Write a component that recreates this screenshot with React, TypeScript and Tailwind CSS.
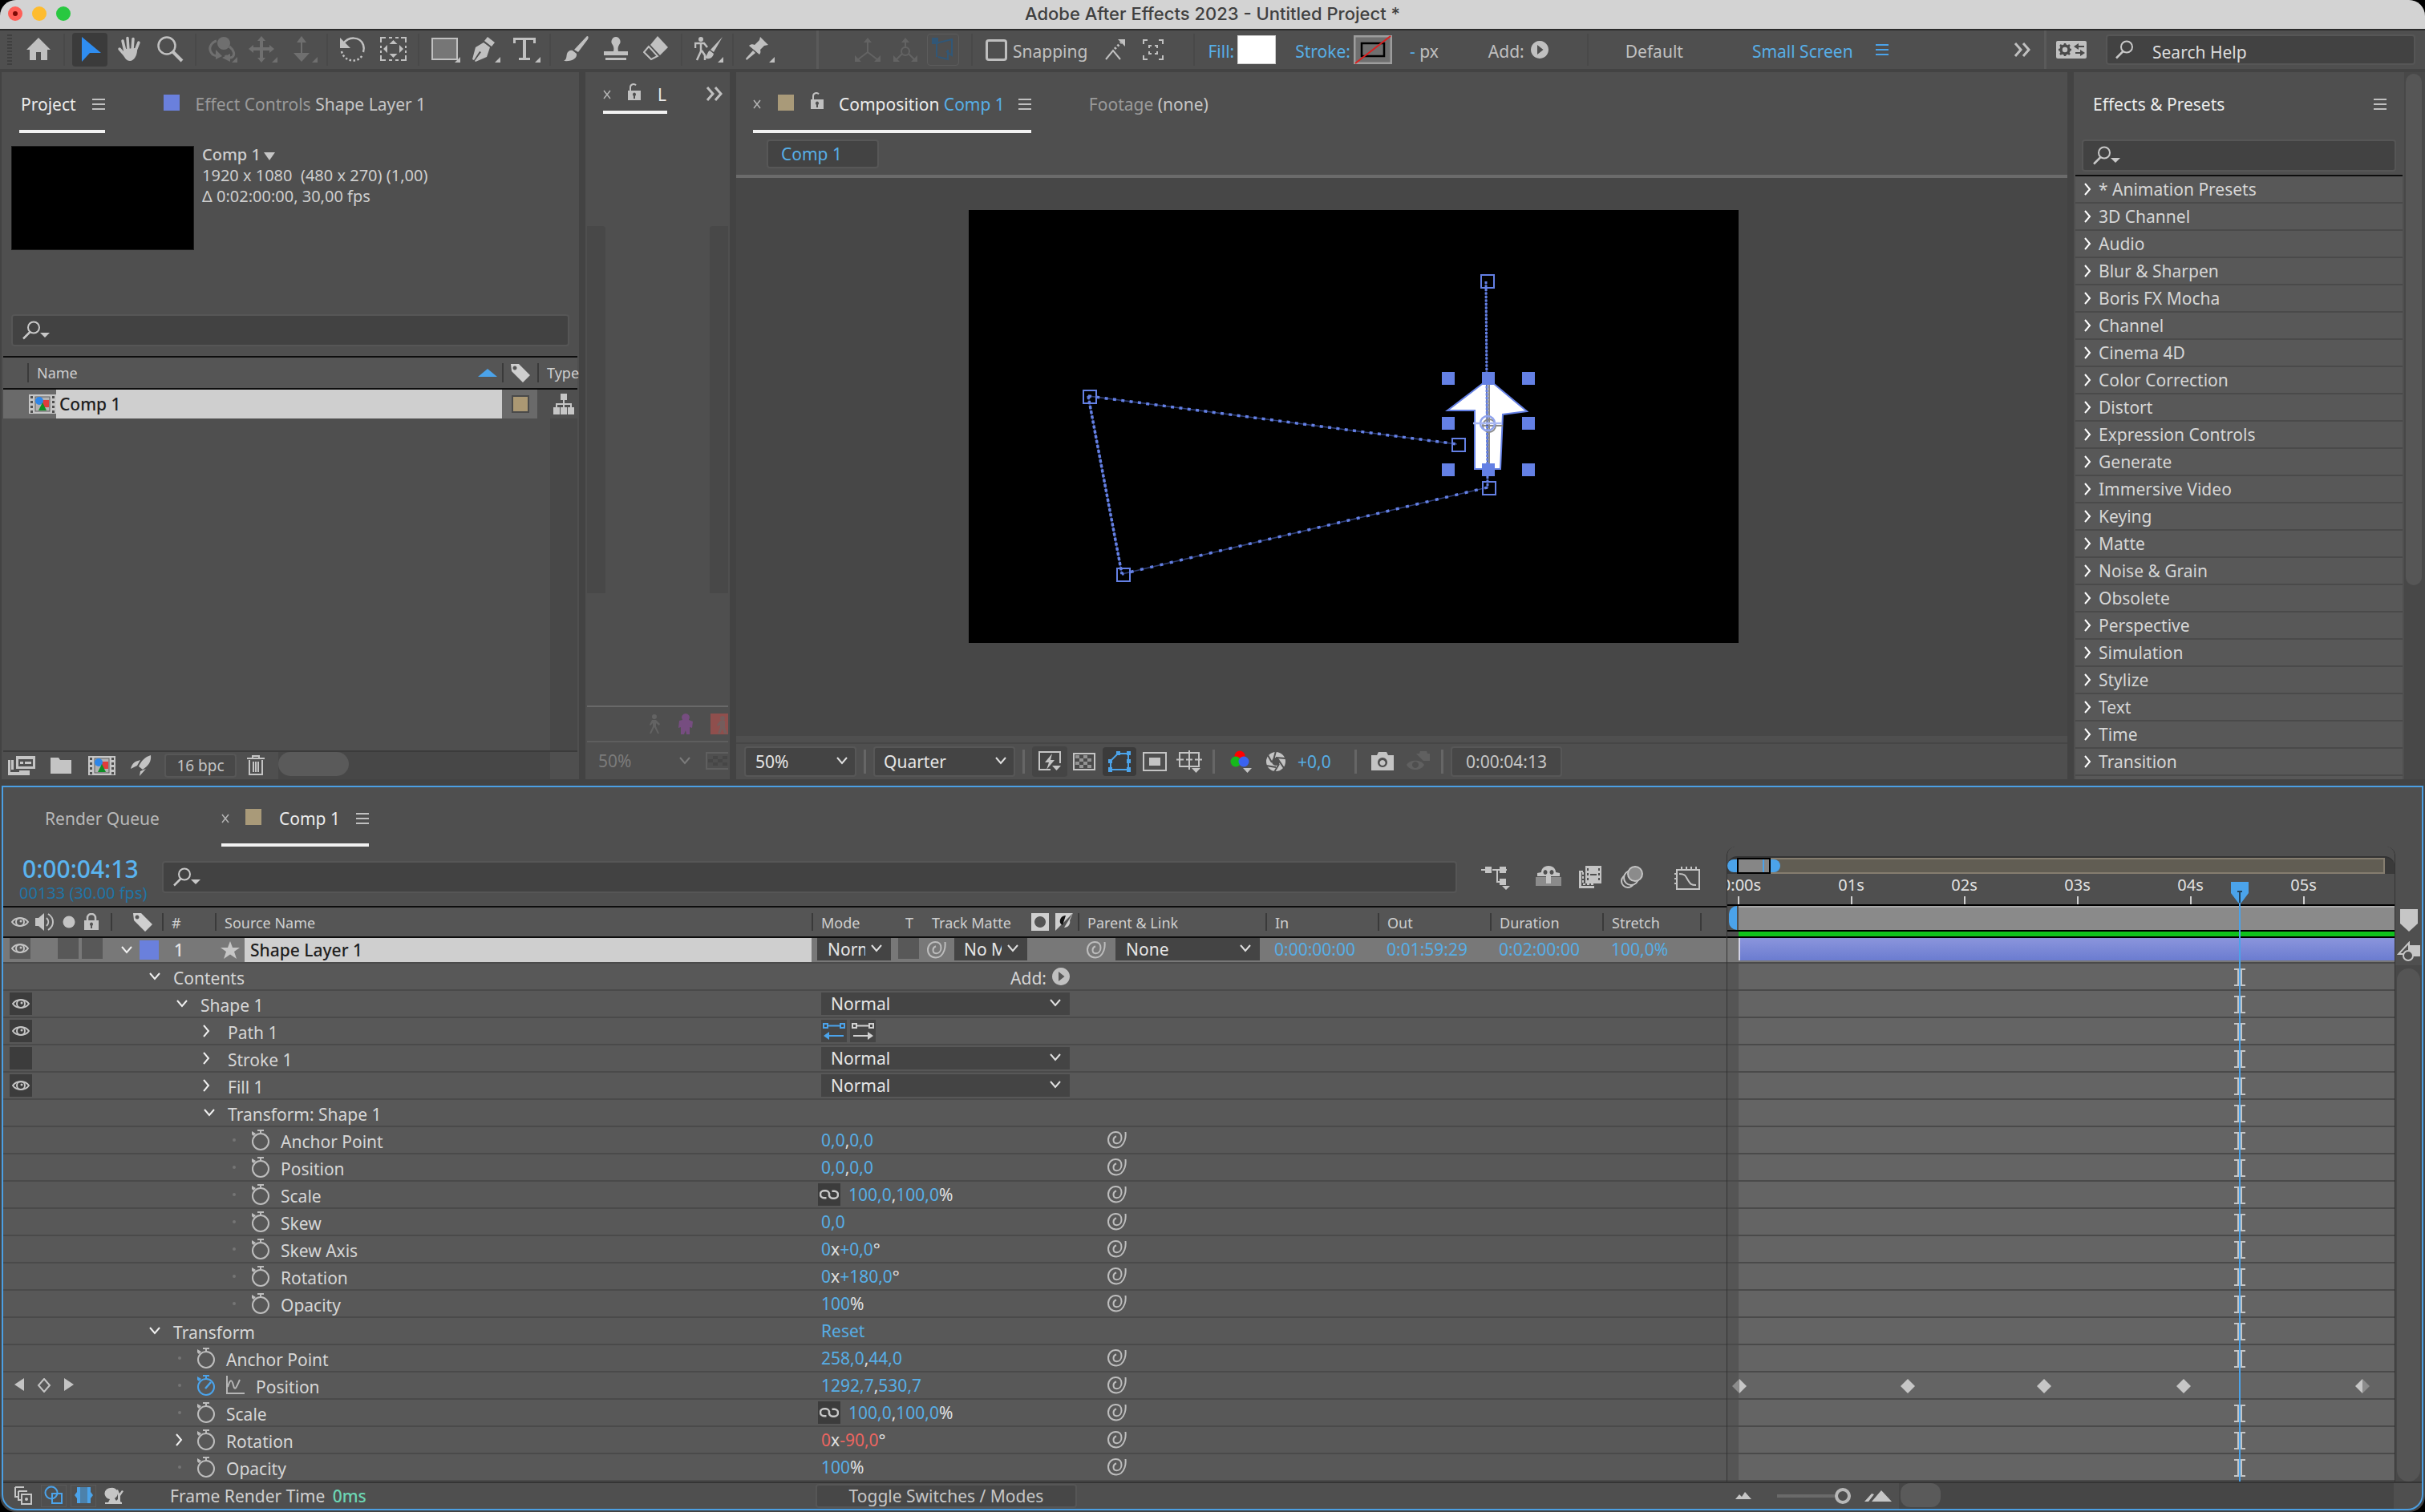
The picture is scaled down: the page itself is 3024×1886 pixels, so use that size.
import type { ReactNode } from "react";

type GlyphProps = { w: number; h: number; className?: string; children: ReactNode };

function Glyph({ w, h, className = "", children }: GlyphProps) {
  return (
    <svg width={w} height={h} viewBox={`0 0 ${w} ${h}`} fill="currentColor" className={`shrink-0 ${className}`} aria-hidden="true">
      {children}
    </svg>
  );
}

/* ---------- small shared icons ---------- */

const MenuIcon = ({ className = "" }: { className?: string }) => (
  <Glyph w={16} h={16} className={className}>
    <path d="M0 1h16v2H0zM0 7h16v2H0zM0 13h16v2H0z" />
  </Glyph>
);

const ChevronDown = ({ className = "" }: { className?: string }) => (
  <Glyph w={16} h={12} className={className}>
    <path d="M2 2l6 7 6-7" fill="none" stroke="currentColor" strokeWidth="2" />
  </Glyph>
);

const ChevronRight = ({ className = "" }: { className?: string }) => (
  <Glyph w={10} h={16} className={className}>
    <path d="M1 1l6 7-6 7" fill="none" stroke="currentColor" strokeWidth="2" />
  </Glyph>
);

const DoubleChevron = ({ className = "" }: { className?: string }) => (
  <Glyph w={22} h={18} className={className}>
    <path d="M2 1l7 8-7 8M12 1l7 8-7 8" fill="none" stroke="currentColor" strokeWidth="3" />
  </Glyph>
);

const CloseIcon = () => (
  <Glyph w={10} h={12} className="text-[#b5b5b5]">
    <path d="M1 1l8 10M9 1l-8 10" fill="none" stroke="currentColor" strokeWidth="1.500" />
  </Glyph>
);

const UnlockIcon = () => (
  <Glyph w={18} h={22} className="text-[#c0c0c0]">
    <path d="M4 10V5a4 4 0 0 1 7-2.600" fill="none" stroke="currentColor" strokeWidth="2" />
    <path fillRule="evenodd" d="M1 9h16v12H1zM9 11.500a2.300 2.300 0 0 0-1 4.200V19h2v-3.300a2.300 2.300 0 0 0-1-4.200z" />
  </Glyph>
);

const LockIcon = () => (
  <Glyph w={20} h={22}>
    <path d="M5 10V6a5 5 0 0 1 10 0v4" fill="none" stroke="currentColor" strokeWidth="2.500" />
    <path fillRule="evenodd" d="M1 9h18v12H1zM10 11.500a2.300 2.300 0 0 0-1 4.200V19h2v-3.300a2.300 2.300 0 0 0-1-4.200z" />
  </Glyph>
);

const SearchIcon = ({ menu = false }: { menu?: boolean }) => (
  <Glyph w={34} h={24} className="text-[#c8c8c8]">
    <circle cx="14" cy="8.500" r="7" fill="none" stroke="currentColor" strokeWidth="2" />
    <path d="M9.500 14L1 22.500" fill="none" stroke="currentColor" strokeWidth="2.500" />
    {menu && <path d="M22 15h12l-6 6z" />}
  </Glyph>
);

const TagIcon = () => (
  <Glyph w={24} h={24}>
    <path fillRule="evenodd" d="M0 1h10l14 14-9 9L1 10zM5 3.500a2.500 2.500 0 1 0 .01 0z" />
  </Glyph>
);

const EyeIcon = () => (
  <Glyph w={22} h={14} className="text-[#c4c4c4]">
    <path d="M1 7C5 .5 17 .5 21 7C17 13.500 5 13.500 1 7z" fill="none" stroke="currentColor" strokeWidth="2" />
    <circle cx="11" cy="7" r="5" fill="none" stroke="currentColor" strokeWidth="2" />
    <circle cx="12" cy="6" r="1.500" />
  </Glyph>
);

const PlayCircle = () => (
  <Glyph w={22} h={22} className="text-[#c0c0c0]">
    <path fillRule="evenodd" d="M11 0a11 11 0 1 0 .01 0zM8 5l7.500 6L8 17z" />
  </Glyph>
);

const Pickwhip = () => (
  <Glyph w={24} h={22} className="text-[#bdbdbd]">
    <path
      d="M22.500 1c.4 4 .3 7-1 10.500C19.500 17 16 20.500 11 20.500C5 20.500 1 16.500 1 10.800C1 5 5 1 10.500 1c4.500 0 7 3 7 7.200c0 4-2.500 7-6 7c-2.500 0-4-1.700-4-4.200c0-2.300 1.500-4 3.500-4.800"
      fill="none"
      stroke="currentColor"
      strokeWidth="2"
    />
  </Glyph>
);

const Stopwatch = ({ on = false }: { on?: boolean }) => (
  <Glyph w={26} h={28} className={on ? "text-[#4ba3ea]" : "text-[#bdbdbd]"}>
    <circle cx="13" cy="16" r="10" fill="none" stroke="currentColor" strokeWidth="2" />
    <path d="M9 1h8v2h-3v3h-2V3H9zM2 3l5 3-3 3-2-2z" />
    {on && <path d="M12 18l7-8" stroke="currentColor" strokeWidth="2.500" />}
  </Glyph>
);

const CompIcon = () => (
  <Glyph w={34} h={24}>
    <rect width="34" height="24" fill="#c6c6c6" />
    <path d="M2 2h3v3H2zM2 8h3v3H2zM2 14h3v3H2zM2 20h3v3H2zM29 2h3v3h-3zM29 8h3v3h-3zM29 14h3v3h-3zM29 20h3v3h-3z" fill="#4f4f4f" />
    <rect x="8" y="3" width="18" height="18" fill="#b2b2b2" stroke="#5c5c5c" />
    <rect x="17" y="7" width="8" height="9" fill="#e03c3c" />
    <circle cx="13" cy="8" r="5" fill="#2e86e8" />
    <path d="M17 10l5 10H12z" fill="#0d8f24" />
  </Glyph>
);

const Star = () => (
  <Glyph w={24} h={22} className="text-[#c6c6c6]">
    <path d="M12 0l3 8h9l-7 5 3 9-8-5.500L4 22l3-9-7-5h9z" />
  </Glyph>
);

/* ---------- toolbar ---------- */

const tools: { name: string; icon: ReactNode; active?: boolean; dim?: boolean }[][] = [
  [
    {
      name: "Home",
      icon: <path d="M16 2l15 15h-4v13h-8V20h-6v10H5V17H1z" />,
    },
  ],
  [
    { name: "Selection", active: true, icon: <path d="M6 1l24 20H16L6 32z" fill="#2f8df0" /> },
    {
      name: "Hand",
      icon: (
        <>
          <path d="M8 17l2-1 13-1 2 3c0 6-4 13-9 13c-4 0-6-3-8-7z" />
          <path d="M10 19L7 6M14 17L13 2.500M19 17l1-13.500M23 18l4-10M10 24l-7-8" fill="none" stroke="currentColor" strokeWidth="3.500" strokeLinecap="round" />
        </>
      ),
    },
    {
      name: "Zoom",
      icon: (
        <>
          <circle cx="12" cy="12" r="10.500" fill="none" stroke="currentColor" strokeWidth="2.500" />
          <path d="M19 19l12 12" fill="none" stroke="currentColor" strokeWidth="4" />
        </>
      ),
    },
  ],
  [
    {
      name: "Orbit",
      dim: true,
      icon: (
        <>
          <circle cx="19" cy="9" r="8" />
          <path d="M10 6C3 8 0 15 3 20c2 4 6 5 9 4M26 13c6 5 7 10 4 13c-3 2-7 1-9-2" fill="none" stroke="currentColor" strokeWidth="3" />
          <path d="M9 17v12l8-4zM17 27l10-5v10zM29 33h7v-7z" />
        </>
      ),
    },
    {
      name: "Pan",
      dim: true,
      icon: <path d="M16 0l5 6h-3v8h8v-3l6 5-6 5v-3h-8v9h3l-5 6-5-6h3v-9H6v3l-6-5 6-5v3h8V6h-3zM29 33h7v-7z" />,
    },
    { name: "Dolly", dim: true, icon: <path d="M16 0l6 8h-5v13h9L16 32 6 21h9V8h-5zM29 33h7v-7z" /> },
  ],
  [
    {
      name: "Rotation",
      icon: (
        <>
          <path d="M4 10C10 0 25 0 29 11c1 3 1 6 0 9" fill="none" stroke="currentColor" strokeWidth="2.500" />
          <path d="M0 2v13h13z" />
          <path d="M2 19c3 14 22 15 26 4" fill="none" stroke="currentColor" strokeWidth="2.500" strokeDasharray="2.500 2.500" />
        </>
      ),
    },
    {
      name: "Anchor",
      icon: (
        <>
          <path d="M1 8V2h6M26 2h6v6M32 24v6h-6M7 30H1v-6M11 2h4M19 2h4M11 30h4M19 30h4M1 12v3M1 18v3M32 12v3M32 18v3" fill="none" stroke="currentColor" strokeWidth="2" />
          <path d="M16.500 5l5 5h-10zM16.500 27l5-5h-10zM4 16l5-5v10zM29 16l-5-5v10z" />
        </>
      ),
    },
  ],
  [
    {
      name: "Rectangle",
      icon: (
        <>
          <rect x="1" y="3" width="31" height="26" fill="#767676" stroke="currentColor" strokeWidth="2" />
          <path d="M29 33h7v-7z" />
        </>
      ),
    },
    {
      name: "Pen",
      icon: (
        <>
          <path d="M20 1l9 7-4 5-9-7zM15 8l8 6-4 12-14 6-1-1 8-11-2-1L3 30l-2-1 4-15z" />
          <path d="M29 33h7v-7z" />
        </>
      ),
    },
    { name: "Type", icon: <path d="M2 2h28v7h-3V5h-9v22h5v3H9v-3h5V5H5v4H2zM29 33h7v-7z" /> },
  ],
  [
    {
      name: "Brush",
      icon: <path d="M30 0c2 0 2 2 1 4L19 20l-5-3zM12 18l5 4c1 6-6 10-16 9c4-2 3-5 4-9c1-3 4-5 7-4z" />,
    },
    {
      name: "Clone Stamp",
      icon: <path d="M16 1a6 6 0 0 1 4 10c-1 2-2 4-1 8h12v5H1v-5h12c1-4 0-6-1-8a6 6 0 0 1 4-10zM3 27h26v3H3z" />,
    },
    {
      name: "Eraser",
      icon: (
        <>
          <path d="M18 0l13 14-10 10L9 11z" />
          <path d="M7 13L1 20l9 9 8-4z" fill="none" stroke="currentColor" strokeWidth="2" />
        </>
      ),
    },
  ],
  [
    {
      name: "Roto Brush",
      icon: (
        <>
          <circle cx="8" cy="4" r="3" />
          <path d="M0 9h12l4 5M8 8v11L3 30M9 18l4 6v6M1 9v6" fill="none" stroke="currentColor" strokeWidth="2.500" />
          <path d="M35 1L24 20l-4-3zM19 18l5 4c-1 5-6 8-11 5c3-3 3-7 6-9zM29 33h7v-7z" />
        </>
      ),
    },
  ],
  [
    {
      name: "Puppet Pin",
      icon: <path d="M18 1l10 10-5 1-5 5c1 3 0 5-1 6L4 12c2-2 5-2 7-1l6-6zM9 18l3 3L1 30l-1-2zM29 33h7v-7z" />,
    },
  ],
];

const Divider = ({ className = "" }: { className?: string }) => (
  <div className={`flex w-[14px] shrink-0 justify-center ${className}`}>
    <span className="h-[40px] w-[2px] bg-[#494949]" />
  </div>
);

function Toolbar() {
  return (
    <header className="flex h-[50px] items-center border-t-2 border-[#2b2b2b] bg-[#4f4f4f] text-[#c0c0c0]">
      <div className="flex w-[23px] shrink-0 justify-center">
        <Glyph w={6} h={38} className="text-[#3f3f3f]">
          <path d="M3 0v38" stroke="currentColor" strokeWidth="6" strokeDasharray="2 2" />
        </Glyph>
      </div>
      {tools.map((group, i) => (
        <div key={i} className="flex items-center">
          {i > 0 && <Divider />}
          {group.map((t) => (
            <button
              key={t.name}
              aria-label={t.name}
              className={`mx-[3px] flex h-[42px] w-[44px] shrink-0 items-center justify-center rounded ${t.active ? "bg-[#3b3b3b]" : ""} ${t.dim ? "text-[#6f6f6f]" : ""}`}
            >
              <Glyph w={36} h={34} className="ml-1">
                {t.icon}
              </Glyph>
            </button>
          ))}
        </div>
      ))}
      <span className="ml-[47px] h-[48px] w-[3px] shrink-0 bg-[#5a5a5a]" />
      <div className="ml-[45px] flex shrink-0 items-center gap-4 text-[#636363]">
        <Glyph w={32} h={30}>
          <path d="M16 3v15L3 28M16 18l13 10" fill="none" stroke="currentColor" strokeWidth="2" />
          <path d="M16 0l5 6H11zM0 30v-8l8 8zM32 30v-8l-8 8z" />
        </Glyph>
        <Glyph w={30} h={30}>
          <path d="M15 3v10M11 20L3 28M19 20l8 8" fill="none" stroke="currentColor" strokeWidth="2" />
          <circle cx="15" cy="17" r="5" fill="none" stroke="currentColor" strokeWidth="2" />
          <path d="M15 0l5 6H10zM0 30v-8l8 8zM30 30v-8l-8 8z" />
        </Glyph>
        <span className="-ml-1 flex h-[40px] w-[40px] items-center justify-center rounded border border-[#5c5c5c] text-[#315777]">
          <Glyph w={28} h={30}>
            <path d="M6 7v17M5 7l20-5v20l-7-5M8 24l12 3V15" fill="none" stroke="currentColor" strokeWidth="2" />
            <path d="M0 0h8v8H0z" />
          </Glyph>
        </span>
      </div>
      <Divider className="ml-[9px]" />
      <label className="ml-[10px] flex shrink-0 items-center gap-[7px]">
        <input type="checkbox" className="size-[27px] appearance-none rounded border-[3px] border-[#bebebe]" />
        <span className="pt-[3px]">Snapping</span>
      </label>
      <Glyph w={28} h={28} className="ml-[21px]">
        <path d="M2 26l9-11 9 11" fill="none" stroke="currentColor" strokeWidth="2" />
        <path d="M13 13l8-8" fill="none" stroke="currentColor" strokeWidth="3" strokeDasharray="2.500 2.500" />
        <path d="M17 1h9v9z" />
      </Glyph>
      <Glyph w={26} h={26} className="ml-[20px]">
        <path d="M1 6V1h5M20 1h5v5M25 20v5h-5M6 25H1v-5M8 11V8h3M15 8h3v3M18 15v3h-3M11 18H8v-3" fill="none" stroke="currentColor" strokeWidth="2" />
      </Glyph>
      <Divider className="ml-[31px]" />
      <div className="ml-[10px] flex shrink-0 items-center gap-1">
        <span className="pt-[3px] text-[#57aee6]">Fill:</span>
        <button aria-label="Fill colour" className="h-[36px] w-[48px] border border-[#cfcfcf] bg-white" />
      </div>
      <div className="ml-6 flex shrink-0 items-center gap-1">
        <span className="pt-[3px] text-[#57aee6]">Stroke:</span>
        <button aria-label="Stroke colour">
          <Glyph w={48} h={36}>
            <rect x="1" y="1" width="46" height="34" fill="#6f6f6f" stroke="#9d9d9d" strokeWidth="3" />
            <rect x="10" y="10" width="28" height="16" fill="none" stroke="#000" strokeWidth="2.500" />
            <path d="M2 35L46 1" stroke="#dc2020" strokeWidth="2" />
          </Glyph>
        </button>
      </div>
      <span className="ml-[22px] shrink-0 pt-[3px]">
        <span className="text-[#57aee6]">-</span> px
      </span>
      <div className="ml-[62px] flex shrink-0 items-center gap-2">
        <span className="pt-[3px]">Add:</span>
        <button aria-label="Add">
          <PlayCircle />
        </button>
      </div>
      <Divider className="ml-[42px]" />
      <button className="ml-10 pt-[3px]">Default</button>
      <button className="ml-[86px] shrink-0 pt-[3px] text-[#57aee6]">Small Screen</button>
      <MenuIcon className="ml-[28px] text-[#4ba3ea]" />
      <div className="ml-auto flex items-center">
        <DoubleChevron />
        <span className="ml-4 mr-[12px] h-[48px] w-[3px] bg-[#5a5a5a]" />
        <Glyph w={38} h={22}>
          <path d="M2 0h34a2 2 0 0 1 2 2v18a2 2 0 0 1-2 2H2a2 2 0 0 1-2-2V2a2 2 0 0 1 2-2z" />
          <circle cx="11" cy="11" r="5" fill="none" stroke="#4a4a4a" strokeWidth="3.500" />
          <path d="M11 3v3M11 16v3M3 11h3M16 11h3M5 5l2 2M17 17l-2-2M5 17l2-2M17 5l-2 2" stroke="#4a4a4a" strokeWidth="2.500" />
          <path d="M22 7l6-4v3h7v2h-7v3zM36 15l-6-4v3h-6v2h6v3z" fill="#4a4a4a" />
        </Glyph>
        <label className="ml-[24px] mr-3 flex h-[38px] w-[386px] items-center rounded border-2 border-[#565656] bg-[#424242] pl-[10px]">
          <SearchIcon />
          <input aria-label="Search Help" placeholder="Search Help" className="ml-3 w-full bg-transparent pt-[5px] placeholder:text-[#dedede]" />
        </label>
      </div>
    </header>
  );
}

/* ---------- project panel ---------- */

function ProjectPanel() {
  return (
    <section className="ml-[2px] flex w-[720px] shrink-0 flex-col bg-[#4f4f4f]">
      <div className="flex h-[76px] pl-[22px]">
        <button className="flex items-center gap-5 border-b-4 border-[#f2f2f2] pl-[2px] pt-[8px] text-[#ececec]">
          Project
          <MenuIcon className="text-[#c0c0c0]" />
        </button>
        <button className="ml-[73px] flex items-center pt-[4px] text-[#9a9a9a]">
          <span className="mr-5 mb-1 size-5 bg-[#6a80dc]" />
          <span>
            Effect Controls <span className="text-[#c6c6c6]">Shape Layer 1</span>
          </span>
        </button>
      </div>
      <div className="flex gap-[10px] pl-3 pt-[14px]">
        <div className="mt-[2px] h-[130px] w-[228px] border border-[#1a1a1a] bg-black" />
        <div className="text-[20px] leading-[26px] text-[#cecece]">
          <p className="font-medium">
            Comp 1<span className="ml-1 inline-block border-x-[7px] border-t-[10px] border-x-transparent border-t-[#c6c6c6] align-middle" />
          </p>
          <p>1920 x 1080&nbsp; (480 x 270) (1,00)</p>
          <p>Δ 0:02:00:00, 30,00 fps</p>
        </div>
      </div>
      <label className="ml-3 mr-[12px] mt-[80px] flex h-[40px] items-center rounded border-2 border-[#565656] bg-[#424242] pl-3">
        <SearchIcon menu />
        <input aria-label="Search project" className="w-full bg-transparent" />
      </label>
      <div className="mt-[12px] ml-[2px] mr-[2px] flex grow flex-col">
        <table className="w-full table-fixed border-collapse">
          <thead>
            <tr className="h-[40px] border-y-2 border-[#0e0e0e] bg-[#555] text-[18px] text-[#cfcfcf]">
              <th className="pl-[30px] text-left font-normal">
                <span className="flex items-center border-l-2 border-[#3a3a3a] pl-[10px] leading-[24px]">
                  Name
                  <span className="ml-auto mr-[6px] border-x-[12px] border-b-[10px] border-x-transparent border-b-[#4ba3ea]" />
                </span>
              </th>
              <th className="w-[44px]">
                <span className="flex justify-center border-l-2 border-[#3a3a3a]">
                  <TagIcon />
                </span>
              </th>
              <th className="w-[50px] text-left font-normal">
                <span className="block border-l-2 border-[#3a3a3a] pl-[10px] leading-[24px]">Type</span>
              </th>
            </tr>
          </thead>
          <tbody>
            <tr className="h-[36px] bg-[#6a6a6a]">
              <td className="p-0">
                <span className="flex h-[36px] items-center">
                  <span className="ml-[32px]">
                    <CompIcon />
                  </span>
                  <span className="flex h-full grow items-center bg-[#cfcfcf] pl-1 font-medium text-[#1e1e1e]">Comp 1</span>
                </span>
              </td>
              <td className="p-0">
                <span className="ml-3 block h-[22px] w-[22px] border-2 border-[#4a4a4a] bg-[#ab9873]" />
              </td>
              <td className="bg-[#4f4f4f] p-0 pl-5">
                <Glyph w={26} h={26} className="text-[#c6c6c6]">
                  <path d="M9 0h8v8H9zM0 17h8v9H0zM9 17h8v9H9zM18 17h8v9h-8zM12 8h2v9h-2zM3 12h20v2H3zM3 12h2v5H3zM21 12h2v5h-2z" />
                </Glyph>
              </td>
            </tr>
          </tbody>
        </table>
        <div className="ml-auto w-[34px] grow bg-[#484848]" />
      </div>
      <div className="ml-[2px] mr-[2px] flex h-[36px] items-center border-t-2 border-[#3b3b3b] text-[#c4c4c4]">
        <button aria-label="Interpret footage" className="ml-[6px]">
          <Glyph w={34} h={24}>
            <path fillRule="evenodd" d="M10 0h24v16H10zM13 4v9h18V4zM15 7h4v3h-4zM21 7h8v3h-8z" />
            <path d="M0 5h3v15h24v4H0zM4 5h3v12H4zM14 18h13v3H14z" />
          </Glyph>
        </button>
        <button aria-label="New folder" className="ml-[18px]">
          <Glyph w={28} h={22}>
            <path d="M1 1h10l2 3h14v17H1z" />
          </Glyph>
        </button>
        <button aria-label="New composition" className="ml-5">
          <CompIcon />
        </button>
        <button aria-label="Project settings" className="ml-[18px]">
          <Glyph w={28} h={26}>
            <path d="M26 0c1 8-3 13-10 18l-5-4C14 7 19 2 26 0zM10 7l3-1-4 7-8 4c1-5 4-9 9-10zM20 17l-8 9 1-6z" />
          </Glyph>
        </button>
        <button className="ml-[15px] h-[30px] w-[90px] shrink-0 rounded border-2 border-[#575757] bg-[#484848] text-[19px] leading-[26px]">16 bpc</button>
        <button aria-label="Delete" className="ml-[13px] mr-[17px]">
          <Glyph w={22} h={26}>
            <path d="M0 4h22M7 3V1h8v2M3 6v18h16V6M8 8v13M11 8v13M14 8v13" fill="none" stroke="currentColor" strokeWidth="2" />
          </Glyph>
        </button>
        <div className="mr-[34px] h-full grow bg-[#474747]">
          <div className="h-[30px] w-[88px] rounded-2xl bg-[#5a5a5a]" />
        </div>
      </div>
    </section>
  );
}

/* ---------- layer panel ---------- */

function LayerPanel() {
  return (
    <section className="flex w-[180px] shrink-0 flex-col overflow-hidden bg-[#4f4f4f]">
      <div className="flex h-[52px] pl-[22px]">
        <button className="flex w-[80px] items-center border-b-4 border-[#f2f2f2] pt-2 text-[#ececec]">
          <CloseIcon />
          <span className="mx-[20px] mb-[6px]">
            <UnlockIcon />
          </span>
          L
        </button>
        <DoubleChevron className="ml-auto mr-[8px] mt-[18px] text-[#c0c0c0]" />
      </div>
      <div className="mt-[140px] flex h-[458px] justify-between px-[2px]">
        <span className="w-[23px] rounded-tr bg-[#484848]" />
        <span className="w-[23px] rounded-tl bg-[#484848]" />
      </div>
      <div className="mx-[2px] mt-auto flex h-[44px] items-center justify-end gap-5 border-t-2 border-[#6c6c6c] opacity-90">
        <Glyph w={16} h={24} className="text-[#666]">
          <path d="M8 0a3 3 0 1 1 0 6a3 3 0 0 1 0-6zM5 7h5l5 5-1 2-4-3v4l4 9h-2l-4-8-4 8H2l4-9v-4l-3 3-1-1z" />
        </Glyph>
        <Glyph w={22} h={26} className="text-[#7b4d86]">
          <path d="M11 0a5 5 0 0 1 4 8l5 2-1 8-3-1v9h-4l-1-5-2 5H5V17l-3 1 1-9 4-1a5 5 0 0 1 4-8z" />
        </Glyph>
        <Glyph w={22} h={26} className="text-[#7a5f5e]">
          <path d="M0 0h22v26H0z" fill="#96504d" />
          <path d="M15 3a3 3 0 1 1 0 6a3 3 0 0 1 0-6zM12 9h6v8l3 8h-4l-2-6-3 6H9l3-8v-3l-3 2-1-2z" />
        </Glyph>
      </div>
      <div className="mx-[2px] flex h-[48px] items-center border-t-2 border-[#5e5e5e] pl-[14px] text-[#7b7b7b]">
        50%
        <ChevronDown className="ml-auto mr-[18px]" />
        <Glyph w={28} h={22}>
          <rect x="1" y="1" width="40" height="20" fill="none" stroke="#5f5f5f" strokeWidth="2" />
          <path d="M9 5h6v4H9zM21 5h6v4h-6zM3 9h6v4H3zM15 9h6v4h-6zM9 13h6v4H9zM21 13h6v4h-6z" fill="#464646" />
        </Glyph>
      </div>
    </section>
  );
}

/* ---------- composition panel ---------- */

const handles = [
  [598, 210], [648, 210], [698, 210],
  [598, 266], [698, 266],
  [598, 324], [648, 324], [698, 324],
];
const vertices = [[647, 89], [151, 233], [193, 455], [611, 293], [649, 347]];

function Canvas() {
  return (
    <svg width="960" height="540" viewBox="0 0 960 540" className="ml-[290px] mt-10 block bg-black" role="img" aria-label="Composition view">
      <path d="M648 211L696 251L666 255L663 323H631L631 250H597z" fill="#fff" stroke="#6480e4" strokeWidth="2" />
      <path d="M649 218V316M640 269h26" stroke="#8a8a8a" strokeWidth="2" />
      <path d="M645 89L647 346L191 454L149 232L609 292" fill="none" stroke="#2b3a70" strokeWidth="1.500" />
      <path d="M645 89L647 346" fill="none" stroke="#6480e4" strokeWidth="3" strokeDasharray="3 1.500" />
      <path d="M647 346L191 454" fill="none" stroke="#6480e4" strokeWidth="3.500" strokeDasharray="4 8.600" />
      <path d="M149 232L191 454" fill="none" stroke="#6480e4" strokeWidth="3.500" strokeDasharray="4 2.200" />
      <path d="M149 232L609 292" fill="none" stroke="#6480e4" strokeWidth="3.500" strokeDasharray="4 6.400" />
      <circle cx="649" cy="269" r="8" fill="none" stroke="#8a8a8a" strokeWidth="2" />
      <circle cx="647" cy="266" r="9" fill="none" stroke="#8ea2ee" strokeWidth="2.500" />
      <path d="M629 266h36" stroke="#a9b8f3" strokeWidth="2.500" />
      {handles.map(([x, y]) => (
        <rect key={`${x}-${y}`} x={x - 8} y={y - 8} width="16" height="16" fill="#6480e4" />
      ))}
      {vertices.map(([x, y]) => (
        <rect key={`${x}-${y}`} x={x - 8} y={y - 8} width="16" height="16" fill="none" stroke="#6480e4" strokeWidth="2" />
      ))}
    </svg>
  );
}

function Bar() {
  return <span className="mx-[9px] h-[30px] w-[3px] shrink-0 bg-[#666]" />;
}

function Select({ label, value, className = "" }: { label: string; value: string; className?: string }) {
  return (
    <div className="relative shrink-0">
      <select aria-label={label} className={`block appearance-none overflow-hidden pr-8 text-[#e6e6e6] ${className}`}>
        <option>{value}</option>
      </select>
      <ChevronDown className="pointer-events-none absolute right-[10px] top-1/2 -mt-[7px] text-[#e0e0e0]" />
    </div>
  );
}

function CompPanel() {
  return (
    <section className="flex min-w-0 grow flex-col bg-[#4f4f4f]">
      <div className="flex h-[76px] pl-[21px]">
        <button className="flex shrink-0 items-center border-b-4 border-[#f2f2f2] pt-[8px] text-[#ececec]">
          <CloseIcon />
          <span className="mb-1 ml-[21px] size-5 bg-[#a99a79]" />
          <span className="mb-2 ml-5 mr-[18px]">
            <UnlockIcon />
          </span>
          <span>
            Composition <span className="text-[#57aee6]">Comp 1</span>
          </span>
          <MenuIcon className="ml-[17px] text-[#c0c0c0]" />
        </button>
        <button className="ml-[72px] pt-[4px] text-[#9a9a9a]">
          Footage <span className="text-[#c6c6c6]">(none)</span>
        </button>
      </div>
      <div className="flex h-[52px] items-start pl-[38px] pt-2">
        <button className="h-[36px] w-[140px] rounded border-2 border-[#575757] bg-[#434343] pl-4 text-left leading-[32px] text-[#57aee6]">Comp 1</button>
      </div>
      <div className="grow border-t-4 border-[#6b6b6b] bg-[#474747]">
        <Canvas />
      </div>
      <div className="mt-2 flex h-[46px] items-center border-t-2 border-[#464646] pl-[10px] text-[#e4e4e4]">
        <Select label="Magnification" value="50%" className="h-[38px] w-[140px] rounded border-2 border-[#575757] bg-[#444] pl-3" />
        <Bar />
        <Select label="Resolution" value="Quarter" className="h-[38px] w-[177px] rounded border-2 border-[#575757] bg-[#444] pl-[11px]" />
        <Bar />
        <div className="flex items-center text-[#c4c4c4]">
          <button aria-label="Fast previews" className="flex h-[38px] w-[44px] items-center justify-center rounded bg-[#454545]">
            <Glyph w={30} h={26}>
              <path d="M16 23H2V1h26v14" fill="none" stroke="currentColor" strokeWidth="2" />
              <path d="M18 3l-9 11h5l-3 9 10-12h-5z" />
              <path d="M18 18h11l-5.500 6z" />
            </Glyph>
          </button>
          <button aria-label="Transparency grid" className="ml-[7px]">
            <Glyph w={28} h={22}>
              <rect x="1" y="1" width="26" height="20" fill="#4a4a4a" stroke="currentColor" strokeWidth="2" />
              <path d="M3 3h5v4H3zM13 3h5v4h-5zM8 7h5v4H8zM18 7h5v4h-5zM3 11h5v4H3zM13 11h5v4h-5zM8 15h5v4H8zM18 15h5v4h-5z" fill="#939393" />
            </Glyph>
          </button>
          <button aria-label="Mask paths" className="ml-[9px] flex h-[36px] w-[42px] items-center justify-center rounded bg-[#3b3b3b] text-[#4ba3ea]">
            <Glyph w={30} h={26}>
              <path d="M4 23V12L13 3h13v20z" fill="none" stroke="currentColor" strokeWidth="2" />
              <path d="M1 20h5v6H1zM24 20h5v6h-5zM24 0h5v5h-5zM11 0h5v5h-5zM1 10h5v5H1zM24 10h5v5h-5z" />
            </Glyph>
          </button>
          <button aria-label="Region of interest" className="ml-2">
            <Glyph w={30} h={24}>
              <rect x="1" y="1" width="28" height="22" fill="none" stroke="currentColor" strokeWidth="2" />
              <path d="M8 7h14v10H8z" />
            </Glyph>
          </button>
          <button aria-label="Grid and guides" className="ml-3">
            <Glyph w={32} h={28}>
              <rect x="4" y="3" width="24" height="17" fill="none" stroke="currentColor" strokeWidth="2" />
              <path d="M16 0v24M0 11.500h9M12 11.500h8M23 11.500h9" stroke="currentColor" strokeWidth="2" />
              <path d="M19 22h11l-5.500 6z" />
            </Glyph>
          </button>
          <span className="w-1" />
          <Bar />
          <button aria-label="Channels" className="ml-[10px]">
            <Glyph w={28} h={28}>
              <circle cx="12" cy="7" r="6.500" fill="#f00" />
              <circle cx="7" cy="14" r="6.500" fill="#16b91b" />
              <circle cx="17" cy="14" r="6.500" fill="#3a62f0" />
              <path d="M16 22h11l-5.500 6z" />
            </Glyph>
          </button>
          <button aria-label="Reset exposure" className="ml-4">
            <Glyph w={26} h={26}>
              <circle cx="13" cy="13" r="8.500" fill="none" stroke="currentColor" strokeWidth="7" />
              <path d="M13 0l-3 11M25 9l-12-1M23 21l-6-9M11 26l6-10M1 18l12 2M3 5l5 9" stroke="#4f4f4f" strokeWidth="2" />
            </Glyph>
          </button>
          <button className="ml-[14px] w-[46px] text-left text-[#57aee6]">+0,0</button>
          <span className="w-4" />
          <Bar />
          <button aria-label="Snapshot" className="ml-2">
            <Glyph w={30} h={24}>
              <path fillRule="evenodd" d="M1 4h7l2-4h10l2 4h7v19H1zM15 7a6 6 0 1 0 .01 0zM15 10a3.500 3.500 0 1 1-.01 0z" />
            </Glyph>
          </button>
          <Glyph w={30} h={26} className="ml-[14px] text-[#606060]">
            <path d="M1 17c4-7 18-7 22 0c-4 8-18 8-22 0zM12 13a4 4 0 1 0 .01 0zM13 3h4l1-3h8l1 3h3v9h-8z" fillRule="evenodd" />
          </Glyph>
          <span className="w-[5px]" />
          <Bar />
        </div>
        <button className="h-[38px] w-[139px] rounded border-2 border-[#575757] bg-[#474747] text-[#c6c6c6]">0:00:04:13</button>
      </div>
    </section>
  );
}

/* ---------- effects panel ---------- */

const effects = [
  "* Animation Presets", "3D Channel", "Audio", "Blur & Sharpen", "Boris FX Mocha", "Channel", "Cinema 4D",
  "Color Correction", "Distort", "Expression Controls", "Generate", "Immersive Video", "Keying", "Matte",
  "Noise & Grain", "Obsolete", "Perspective", "Simulation", "Stylize", "Text", "Time", "Transition",
];

function EffectsPanel() {
  return (
    <section className="flex w-[438px] shrink-0 bg-[#4f4f4f]">
      <div className="flex w-[412px] flex-col">
        <div className="flex h-[76px] items-center justify-between pl-6 pr-[22px] pt-[4px] text-[#ececec]">
          <h2>Effects &amp; Presets</h2>
          <MenuIcon className="text-[#c0c0c0]" />
        </div>
        <label className="ml-[10px] mr-[10px] mt-2 flex h-[40px] items-center rounded border-2 border-[#565656] bg-[#424242] pl-3">
          <SearchIcon menu />
          <input aria-label="Search effects" className="w-full bg-transparent" />
        </label>
        <ul className="mx-[2px] mt-[4px] grow overflow-hidden border-t-2 border-[#0e0e0e] bg-[#585858]">
          {effects.map((name) => (
            <li key={name} className="flex h-[34px] items-center gap-2 border-b-2 border-[#4a4a4a] pl-[11px] text-[#d6d6d6]">
              <ChevronRight className="text-white" />
              {name}
            </li>
          ))}
        </ul>
      </div>
      <div className="w-[26px] bg-[#484848] pl-[2px] pt-[2px]">
        <div className="h-[638px] w-5 rounded-full bg-[#565656]" />
      </div>
    </section>
  );
}

/* ---------- timeline ---------- */

type Part = [string, "v" | "t" | "r"];

type Row = {
  name: string;
  pad: string;
  eye?: "on" | "off";
  arrow?: "down" | "right";
  watch?: boolean;
  keyed?: boolean;
  mode?: boolean;
  path?: boolean;
  add?: boolean;
  link?: boolean;
  parts?: Part[];
};

const L1 = "pl-[179px]";
const L2 = "pl-[213px]";
const L3 = "pl-[247px]";
const P2 = "pl-[210px]";
const P4 = "pl-[278px]";

const rows: Row[] = [
  { name: "Contents", pad: L1, arrow: "down", add: true },
  { name: "Shape 1", pad: L2, arrow: "down", eye: "on", mode: true },
  { name: "Path 1", pad: L3, arrow: "right", eye: "on", path: true },
  { name: "Stroke 1", pad: L3, arrow: "right", eye: "off", mode: true },
  { name: "Fill 1", pad: L3, arrow: "right", eye: "on", mode: true },
  { name: "Transform: Shape 1", pad: L3, arrow: "down" },
  { name: "Anchor Point", pad: P4, watch: true, parts: [["0,0", "v"], [",", "t"], ["0,0", "v"]] },
  { name: "Position", pad: P4, watch: true, parts: [["0,0", "v"], [",", "t"], ["0,0", "v"]] },
  { name: "Scale", pad: P4, watch: true, link: true, parts: [["100,0", "v"], [",", "t"], ["100,0", "v"], ["%", "t"]] },
  { name: "Skew", pad: P4, watch: true, parts: [["0,0", "v"]] },
  { name: "Skew Axis", pad: P4, watch: true, parts: [["0", "v"], ["x", "t"], ["+0,0", "v"], ["°", "t"]] },
  { name: "Rotation", pad: P4, watch: true, parts: [["0", "v"], ["x", "t"], ["+180,0", "v"], ["°", "t"]] },
  { name: "Opacity", pad: P4, watch: true, parts: [["100", "v"], ["%", "t"]] },
  { name: "Transform", pad: L1, arrow: "down", parts: [["Reset", "v"]] },
  { name: "Anchor Point", pad: P2, watch: true, parts: [["258,0", "v"], [",", "t"], ["44,0", "v"]] },
  { name: "Position", pad: P2, watch: true, keyed: true, parts: [["1292,7", "v"], [",", "t"], ["530,7", "v"]] },
  { name: "Scale", pad: P2, watch: true, link: true, parts: [["100,0", "v"], [",", "t"], ["100,0", "v"], ["%", "t"]] },
  { name: "Rotation", pad: P2, watch: true, arrow: "right", parts: [["0", "r"], ["x", "t"], ["-90,0", "r"], ["°", "t"]] },
  { name: "Opacity", pad: P2, watch: true, parts: [["100", "v"], ["%", "t"]] },
];

const partColor = { v: "text-[#57aee6]", t: "text-[#e0e0e0]", r: "text-[#ec6560]" };

function LinkIcon() {
  return (
    <span className="-ml-1 mr-[10px] flex h-[28px] w-[28px] items-center justify-center bg-[#3c3c3c]">
      <Glyph w={24} h={12} className="text-[#c8c8c8]">
        <path d="M12 8V5.500a4.200 4.200 0 0 0-4.200-4.200H5.500a4.500 4.500 0 0 0 0 9h3M12 4v2.500a4.200 4.200 0 0 0 4.200 4.200h2.300a4.500 4.500 0 0 0 0-9h-3" fill="none" stroke="currentColor" strokeWidth="2.500" />
      </Glyph>
    </span>
  );
}

function PropertyRow({ row }: { row: Row }) {
  return (
    <div className="flex h-[34px] border-b-2 border-[#4a4a4a] bg-[#585858] text-[#d6d6d6]">
      <div className={`relative flex min-w-0 grow items-center ${row.pad}`}>
        {row.eye && (
          <button aria-label={`Show ${row.name}`} className="absolute left-2 flex h-[28px] w-[28px] items-center justify-center bg-[#3c3c3c]">
            {row.eye === "on" && <EyeIcon />}
          </button>
        )}
        {row.keyed && (
          <div className="absolute left-[14px] flex items-center gap-4 text-[#c4c4c4]">
            <Glyph w={12} h={18}><path d="M12 0v16L0 8z" /></Glyph>
            <Glyph w={18} h={18}><path d="M9 1l7 8-7 8-7-8z" fill="none" stroke="currentColor" strokeWidth="2" /></Glyph>
            <Glyph w={12} h={18}><path d="M0 0v16l12-8z" /></Glyph>
          </div>
        )}
        <span className="flex w-5 shrink-0 justify-center text-[#f0f0f0]">
          {row.arrow === "down" && <ChevronDown />}
          {row.arrow === "right" && <ChevronRight className={row.watch ? "" : "mr-[6px]"} />}
          {!row.arrow && <span className="size-1 rounded-full bg-[#757575]" />}
        </span>
        {row.watch && (
          <button aria-label={`Animate ${row.name}`} className="ml-[10px]">
            <Stopwatch on={row.keyed} />
          </button>
        )}
        {row.keyed && (
          <Glyph w={24} h={24} className="ml-3 text-[#b5b5b5]">
            <path d="M1 0v22h22M2 14c3-10 5-10 7-2c2 8 4 2 8-7" fill="none" stroke="currentColor" strokeWidth="2" />
          </Glyph>
        )}
        <span className={`pt-[3px] leading-[26px] ${row.watch && !row.keyed ? "ml-3" : "ml-[13px]"}`}>{row.name}</span>
      </div>
      <div className="flex w-[1141px] shrink-0 items-center pl-[12px]">
        <div className="flex w-[310px] items-center">
          {row.add && (
            <span className="ml-auto flex items-center gap-[7px]">
              <span className="pt-[3px] leading-[26px]">Add:</span>
              <button aria-label="Add to contents">
                <PlayCircle />
              </button>
            </span>
          )}
          {row.mode && <Select label={`${row.name} mode`} value="Normal" className="h-[28px] w-[310px] bg-[#444] pl-3" />}
          {row.path && (
            <div className="flex gap-1">
              {[false, true].map((fwd) => (
                <button
                  key={String(fwd)}
                  aria-label={fwd ? "Forward path" : "Reverse path"}
                  className={`flex h-[28px] w-[32px] items-center justify-center bg-[#454545] ${fwd ? "text-[#d0d0d0]" : "text-[#4ba3ea]"}`}
                >
                  <Glyph w={28} h={24}>
                    <path d="M1 3h5v5H1zM22 3h5v5h-5zM6 5.500h16" fill="none" stroke="currentColor" strokeWidth="2" />
                    {fwd ? <path d="M2 17h18v-4l7 5-7 5v-4H2z" /> : <path d="M26 17H8v-4l-7 5 7 5v-4h18z" />}
                  </Glyph>
                </button>
              ))}
            </div>
          )}
          {row.link && <LinkIcon />}
          {row.parts && (
            <span>
              {row.parts.map(([text, kind], i) => (
                <span key={i} className={partColor[kind]}>{text}</span>
              ))}
            </span>
          )}
        </div>
        {row.watch && (
          <button aria-label="Pick whip" className="ml-[47px]">
            <Pickwhip />
          </button>
        )}
      </div>
    </div>
  );
}

function HeadCell({ children, className }: { children?: ReactNode; className: string }) {
  return <div className={`flex h-[22px] shrink-0 items-center border-l-2 border-[#3a3a3a] pl-[10px] ${className}`}>{children}</div>;
}

function LayerOutline() {
  return (
    <div className="flex min-w-0 grow flex-col">
      <div className="flex h-[74px] items-start pt-[8px]">
        <div className="w-[198px] shrink-0 pl-5">
          <p className="pl-1 text-[30px] font-medium leading-[40px] text-[#5ab4f0]">0:00:04:13</p>
          <p className="text-[20px] leading-[20px] text-[#2175a6]">00133 (30.00 fps)</p>
        </div>
        <label className="mt-[10px] flex h-[40px] grow items-center rounded border-2 border-[#565656] bg-[#424242] pl-3">
          <SearchIcon menu />
          <input aria-label="Search layers" className="w-full bg-transparent" />
        </label>
        <div className="flex w-[336px] shrink-0 pl-[30px] pt-4 text-[#c4c4c4]">
          <Glyph w={36} h={30}>
            <path d="M0 5h10M14 5h18M20 5v15h10" fill="none" stroke="currentColor" strokeWidth="2" />
            <path d="M5 1h8v8H5zM23 1h8v8h-8zM23 16h8v8h-8zM26 25h10l-5 5z" />
          </Glyph>
          <Glyph w={32} h={28} className="ml-[32px]">
            <rect y="14" width="32" height="11" fill="#8b8b8b" />
            <path fillRule="evenodd" d="M16 0c6 0 9 4 9 8l5 1v4H19v9h-6v-9H2V9l5-1c0-4 3-8 9-8zM12 5a2.500 3 0 1 0 .01 0zM20 5a2.500 3 0 1 0 .01 0z" />
          </Glyph>
          <Glyph w={28} h={28} className="ml-[22px]">
            <path fillRule="evenodd" d="M8 0h20v22H8zM10 3v3h2V3zM10 9v3h2V9zM10 15v3h2v-3zM24 3v3h2V3zM24 9v3h2V9zM24 15v3h2v-3zM14 10h8v2h-8z" />
            <path d="M0 6h5v2H3v17h16v3H0z" />
            <path d="M5 8v15h13" fill="none" stroke="currentColor" strokeWidth="2" strokeDasharray="3 2" />
          </Glyph>
          <Glyph w={28} h={28} className="ml-[24px]">
            <circle cx="9" cy="19" r="8" fill="none" stroke="currentColor" strokeWidth="2" />
            <circle cx="13" cy="15" r="9" fill="#4f4f4f" stroke="currentColor" strokeWidth="2" />
            <circle cx="18" cy="10" r="9" fill="#8b8b8b" stroke="currentColor" strokeWidth="2" />
          </Glyph>
          <Glyph w={32} h={30} className="ml-[39px]">
            <path d="M3 5h28v24H3zM0 10h4M0 16h4M0 22h4M9 1v4M15 1v4M21 1v4M27 1v4M6 10c8 0 8 3 11 8s4 6 10 6" fill="none" stroke="currentColor" strokeWidth="2" />
          </Glyph>
        </div>
      </div>
      <div className="flex h-[40px] items-center border-y-2 border-[#0e0e0e] bg-[#555] text-[18px] text-[#cfcfcf]">
        <div className="flex w-[134px] shrink-0 items-center gap-2 pl-[10px] text-[#c4c4c4]">
          <EyeIcon />
          <Glyph w={24} h={22}>
            <path d="M0 6h4l7-6v22l-7-6H0z" />
            <path d="M14 6c3 3 3 7 0 10M16 1c8 5 8 15 0 20" fill="none" stroke="currentColor" strokeWidth="2" />
          </Glyph>
          <Glyph w={20} h={16}><circle cx="10" cy="8" r="7.500" /></Glyph>
          <LockIcon />
        </div>
        <HeadCell className="w-[64px]"><span className="ml-4"><TagIcon /></span></HeadCell>
        <HeadCell className="w-[66px]"><span className="pt-[2px]">#</span></HeadCell>
        <HeadCell className="w-[100px] grow"><span className="pt-[2px]">Source Name</span></HeadCell>
        <HeadCell className="w-[332px]">
          <span className="w-[105px] pt-[2px]">Mode</span>
          <span className="w-[33px] pt-[2px]">T</span>
          <span className="w-[124px] pt-[2px]">Track Matte</span>
          <Glyph w={22} h={22}>
            <path fillRule="evenodd" d="M0 0h22v22H0zM11 4a7 7 0 1 0 .01 0z" />
          </Glyph>
          <Glyph w={22} h={22} className="ml-2">
            <path d="M0 0h22L0 22z" />
            <path d="M22 0L11 18a7 7 0 0 0 7-9z" />
            <path d="M13 3a7 7 0 0 0-7 9c1 2 2 2 3 3z" fill="#111" />
          </Glyph>
        </HeadCell>
        <HeadCell className="w-[234px]"><span className="pt-[2px]">Parent &amp; Link</span></HeadCell>
        <HeadCell className="w-[140px]"><span className="pt-[2px]">In</span></HeadCell>
        <HeadCell className="w-[140px]"><span className="pt-[2px]">Out</span></HeadCell>
        <HeadCell className="w-[140px]"><span className="pt-[2px]">Duration</span></HeadCell>
        <HeadCell className="w-[122px]"><span className="pt-[2px]">Stretch</span></HeadCell>
        <HeadCell className="w-[33px]" />
      </div>
      <div className="flex h-[32px] items-center border-b-2 border-[#4a4a4a] bg-[#787878]">
        <div className="flex h-full w-[134px] shrink-0 items-start pl-2 text-[#d6d6d6]">
          <span className="flex h-[26px] w-[26px] items-center justify-center bg-[#5a5a5a]"><EyeIcon /></span>
          <span className="ml-[34px] h-[26px] w-[26px] bg-[#585858]" />
          <span className="ml-1 h-[26px] w-[26px] bg-[#585858]" />
        </div>
        <span className="ml-3 text-[#f0f0f0]"><ChevronDown /></span>
        <span className="ml-2 size-6 shrink-0 bg-[#6a80dc]" />
        <span className="ml-[19px] w-[58px] shrink-0 font-medium text-[#e6e6e6]">1</span>
        <Star />
        <span className="ml-[6px] flex h-full grow items-center bg-[#cfcfcf] pl-[7px] font-medium text-[#1e1e1e]">Shape Layer 1</span>
        <div className="flex h-full w-[1141px] shrink-0 items-start pl-[7px] text-[#57aee6]">
          <Select label="Blend mode" value="Normal" className="h-[28px] w-[92px] bg-[#444] pl-[13px]" />
          <span className="ml-[9px] h-[26px] w-[26px] shrink-0 bg-[#585858]" />
          <span className="mx-[10px] pt-1"><Pickwhip /></span>
          <Select label="Track matte" value="No Matte" className="h-[28px] w-[91px] bg-[#444] pl-3" />
          <span className="ml-[74px] mr-[12px] pt-1"><Pickwhip /></span>
          <Select label="Parent" value="None" className="h-[28px] w-[180px] bg-[#444] pl-[13px]" />
          <span className="ml-[18px] w-[140px]">0:00:00:00</span>
          <span className="w-[140px]">0:01:59:29</span>
          <span className="w-[140px]">0:02:00:00</span>
          <span>100,0%</span>
        </div>
      </div>
      {rows.map((row, i) => (
        <PropertyRow key={i} row={row} />
      ))}
    </div>
  );
}

const seconds = ["0:00s", "01s", "02s", "03s", "04s", "05s"];
// x offsets of the Position keyframes, from the left edge of the track
const keyframes = [15, 225, 395, 569, 792];
const NOW = 639;

function Keyframe({ index, x }: { index: number; x: number }) {
  return (
    <svg width="18" height="18" viewBox="0 0 18 18" className="absolute top-[8px]" style={{ left: x - 9 }} aria-hidden="true">
      <path d="M9 0v18L0 9z" fill={index === 0 ? "#8c8c8c" : "#c6c6c6"} />
      <path d="M9 0l9 9-9 9z" fill={index === keyframes.length - 1 ? "#8c8c8c" : "#c6c6c6"} />
    </svg>
  );
}

function Tracks() {
  return (
    <div className="relative w-[834px] shrink-0 overflow-hidden rounded-t-xl border-x border-[#333]">
      <div className="h-[12px] bg-[#4f4f4f]" />
      <div className="flex h-[22px] items-center rounded-t-xl border-t-2 border-[#333] bg-[#3a3a3a] pr-[12px]">
        <span className="h-4 w-3 rounded-l-full bg-[#4ba3ea]" />
        <span className="flex h-[20px] w-[42px] justify-end border-2 border-black bg-[#868686] pr-[6px]"><span className="w-[2px] bg-[#4ba3ea]" /></span>
        <span className="flex h-[20px] grow items-center border-2 border-l-0 border-[#857d6f] bg-[#615d53]">
          <span className="h-4 w-3 rounded-r-full bg-[#4ba3ea]" />
        </span>
      </div>
      <div className="flex h-[38px] overflow-hidden bg-[#4f4f4f]">
        <div className="-ml-[57px] flex shrink-0">
          {seconds.map((s, i) => (
            <div key={s} className="flex h-full w-[141px] flex-col items-center justify-between text-[20px] leading-[28px] text-[#e2e2e2]">
              <span className={i === 0 ? "pl-2" : ""}>{s}</span>
              <span className={`w-[2px] bg-[#d0d0d0] ${i === 0 ? "h-4" : "h-[10px]"}`} />
            </div>
          ))}
        </div>
      </div>
      <div className="flex h-[34px] border-y-2 border-black bg-[#4f4f4f]">
        <span className="ml-[2px] w-[10px] rounded-l-full bg-[#4ba3ea]" />
        <span className="ml-[2px] grow border-t-2 border-[#a8a8a8] bg-[#8a8a8a]" />
      </div>
      <div className="h-2 border-b-2 border-black bg-[#4f4f4f] pl-[14px]">
        <div className="h-full bg-[#10c11c]" />
      </div>
      <div className="flex h-[32px] border-b-2 border-[#4a4a4a] bg-[#787878] pl-[14px]">
        <span className="h-[28px] grow border-l-2 border-[#d3d3e6] bg-linear-to-b from-[#8b95dc] to-[#6b7cd0]" />
      </div>
      {rows.map((row, i) => (
        <div key={i} className="relative h-[34px] border-b-2 border-[#4a4a4a] bg-[#555] pl-[14px]">
          <div className="h-full bg-[#646464]" />
          {row.keyed
            ? keyframes.map((x, k) => <Keyframe key={x} index={k} x={x} />)
            : (
              <svg width="14" height="22" viewBox="0 0 14 22" className="absolute top-[6px]" style={{ left: NOW - 7 }} aria-hidden="true">
                <path d="M0 1h14M0 21h14M5 1v20M9 1v20" fill="none" stroke="#c6c6c6" strokeWidth="2" />
              </svg>
            )}
        </div>
      ))}
      <div className="absolute bottom-0 top-[44px] flex w-[22px] flex-col items-center" style={{ left: NOW - 11 }}>
        <Glyph w={22} h={26} className="text-[#4ba3ea]">
          <path d="M0 0h22v14l-9 12h-4L0 14z" />
          <path d="M8 12h6M11 12v14" stroke="#23435c" strokeWidth="2" />
        </Glyph>
        <span className="w-[2px] grow bg-[#4ba3ea]" />
      </div>
    </div>
  );
}

function Timeline() {
  return (
    <section className="mx-[2px] mb-[2px] mt-2 rounded-b-[20px] border-2 border-[#4b9fe3] bg-[#4f4f4f]">
      <div className="flex h-[74px] pl-[52px]">
        <button className="w-[148px] whitespace-nowrap pt-[3px] text-left text-[#b8b8b8]">Render Queue</button>
        <button className="ml-[72px] flex items-center border-b-4 border-[#f2f2f2] pt-[7px] text-[#ececec]">
          <CloseIcon />
          <span className="mb-1 ml-5 mr-[22px] size-5 bg-[#a99a79]" />
          Comp 1
          <MenuIcon className="ml-5 text-[#c0c0c0]" />
        </button>
      </div>
      <div className="flex">
        <LayerOutline />
        <Tracks />
        <div className="flex w-[33px] shrink-0 flex-col items-center pt-[78px] text-[#c6c6c6]">
          <Glyph w={22} h={28}><path d="M0 0h22v18L11 28 0 18z" /></Glyph>
          <Glyph w={30} h={26} className="mt-[12px]">
            <path d="M14 5h15v14H14z" />
            <path d="M15 2L2 16h13z" fill="#4f4f4f" stroke="currentColor" strokeWidth="2" />
            <circle cx="14" cy="18" r="6" fill="#4f4f4f" stroke="currentColor" strokeWidth="2" />
          </Glyph>
          <div className="mt-[4px] w-full grow bg-[#484848] pt-1">
            <div className="ml-[2px] h-full w-[29px] rounded-full bg-[#555]" />
          </div>
        </div>
      </div>
      <footer className="flex h-[34px] items-center overflow-hidden rounded-b-[18px] border-t-2 border-[#353535] text-[#c6c6c6]">
        <div className="flex min-w-0 grow items-center pl-[14px]">
          <Glyph w={22} h={24}>
            <path d="M1 1h11M1 1v12h3M5 6h11M5 6v11h3M9 10h12v12H9z" fill="none" stroke="currentColor" strokeWidth="2" />
            <circle cx="15" cy="16" r="2" />
          </Glyph>
          <span className="ml-[11px] flex w-8 items-center justify-center border border-[#5a5a5a] text-[#4ba3ea]">
            <Glyph w={24} h={26}>
              <circle cx="9" cy="9" r="7.500" fill="none" stroke="currentColor" strokeWidth="2" />
              <path d="M10 10h12v12H10z" fill="none" stroke="currentColor" strokeWidth="2" />
            </Glyph>
          </span>
          <span className="ml-[5px] flex w-8 items-center justify-center border border-[#5a5a5a] text-[#4ba3ea]">
            <Glyph w={24} h={26}>
              <path d="M7 2h11v20H7z" opacity=".6" />
              <path d="M4 2h4v20H4v-6l-3-4 3-4zM17 2h4v6l3 4-3 4v6h-4z" />
            </Glyph>
          </span>
          <Glyph w={26} h={22} className="ml-[10px]">
            <path d="M8 1a7 7 0 0 1 5 13l2 3 2-2v-6l-2-5 2-1 2 5 3-4 2 1-4 6v7l2 1v2H1v-2h4l2-4A7 7 0 0 1 8 1z" />
          </Glyph>
          <span className="ml-[56px] text-[#d0d0d0]">
            Frame Render Time <span className="ml-1 font-medium text-[#6cd6b4]">0ms</span>
          </span>
        </div>
        <div className="flex w-[1141px] shrink-0 items-center pl-[5px]">
          <button className="h-[30px] w-[326px] rounded border-2 border-[#565656] bg-[#474747] leading-[26px]">Toggle Switches / Modes</button>
        </div>
        <div className="flex w-[867px] shrink-0 items-center pl-[11px]">
          <Glyph w={20} h={12}><path d="M0 10l5-6 3 3 4-6 8 9z" /></Glyph>
          <input
            type="range"
            aria-label="Timeline zoom"
            defaultValue={100}
            className="ml-[32px] h-5 w-[92px] appearance-none bg-linear-to-r from-[#6a6a6a] to-[#6a6a6a] bg-[length:100%_4px] bg-center bg-no-repeat [&::-webkit-slider-thumb]:size-5 [&::-webkit-slider-thumb]:appearance-none [&::-webkit-slider-thumb]:rounded-full [&::-webkit-slider-thumb]:border-4 [&::-webkit-slider-thumb]:border-[#b8b8b8] [&::-webkit-slider-thumb]:bg-[#4f4f4f]"
          />
          <Glyph w={34} h={14} className="ml-[17px]"><path d="M0 14L9 4l3 1-7 9zM9 14L21 0l13 14z" /></Glyph>
          <div className="ml-[9px] h-[32px] grow bg-[#464646] pl-[2px]">
            <div className="h-[30px] w-[50px] rounded-xl bg-[#5a5a5a]" />
          </div>
          <span className="w-[35px]" />
        </div>
      </footer>
    </section>
  );
}

export default function App() {
  return (
    <div className="h-screen w-full bg-black">
      <main className="flex h-full flex-col overflow-hidden rounded-[20px] bg-[#434343] font-['Noto_Sans',sans-serif] text-[21px] leading-[28px]">
        <div className="flex h-[36px] shrink-0 items-center bg-[#d3d3d3] px-[10px] pb-[2px]">
          <div className="flex w-[120px] gap-3">
            <span className="flex size-[18px] items-center justify-center rounded-full bg-[#fe5f57]"><span className="size-[6px] rounded-full bg-[#7d0b06]" /></span>
            <span className="size-[18px] rounded-full bg-[#febc2e]" />
            <span className="size-[18px] rounded-full bg-[#28c840]" />
          </div>
          <h1 className="grow text-center font-['Inter',sans-serif] text-[22px] font-medium text-[#404040]">Adobe After Effects 2023 - Untitled Project *</h1>
          <span className="w-[120px]" />
        </div>
        <Toolbar />
        <div className="mt-1 flex min-h-0 grow gap-2">
          <ProjectPanel />
          <LayerPanel />
          <CompPanel />
          <EffectsPanel />
        </div>
        <Timeline />
      </main>
    </div>
  );
}
